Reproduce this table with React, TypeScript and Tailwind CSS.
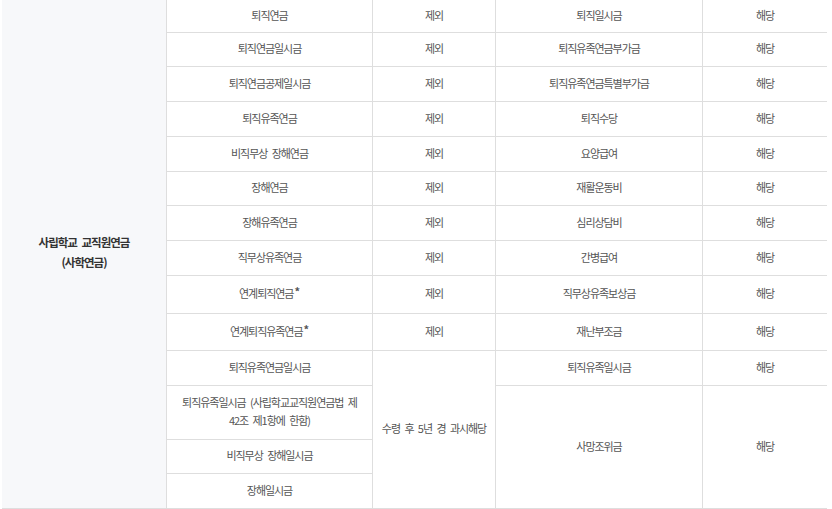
import React from "react";

const font = { fontFamily: '"Noto Sans CJK KR", "Noto Sans", sans-serif' };

const Star = () => (
  <sup className="text-[11px] font-bold relative -top-[2px] ml-[1px] tracking-normal">*</sup>
);

const left: React.ReactNode[] = [
  "퇴직연금",
  "퇴직연금일시금",
  "퇴직연금공제일시금",
  "퇴직유족연금",
  "비직무상 장해연금",
  "장해연금",
  "장해유족연금",
  "직무상유족연금",
  <>연계퇴직연금<Star /></>,
  <>연계퇴직유족연금<Star /></>,
  "퇴직유족연금일시금",
  <>퇴직유족일시금 (사립학교교직원연금법 제<br />42조 제1항에 한함)</>,
  "비직무상 장해일시금",
  "장해일시금",
];

const right: string[] = [
  "퇴직일시금",
  "퇴직유족연금부가금",
  "퇴직유족연금특별부가금",
  "퇴직수당",
  "요양급여",
  "재활운동비",
  "심리상담비",
  "간병급여",
  "직무상유족보상금",
  "재난부조금",
  "퇴직유족일시금",
];

const rowStarts = ["row-start-1", "row-start-2", "row-start-3", "row-start-4", "row-start-5", "row-start-6", "row-start-7", "row-start-8", "row-start-9", "row-start-10", "row-start-11", "row-start-12", "row-start-13", "row-start-14"];

const cellBase =
  "flex items-center justify-center text-center border-[#dedede] text-[#555] text-[11px] leading-[18px] tracking-[-1.05px] [word-spacing:3px] pb-[3px]";

export default function App() {
  return (
    <div className="w-[832px] h-[509px] bg-white overflow-hidden" style={font}>
      <div className="ml-[2px] w-[825px] grid grid-cols-[165px_206px_123px_207px_124px] grid-rows-[33px_34px_35px_35px_35px_34px_35px_35px_38px_37px_35px_54px_34px_35px]">
        <div className="col-start-1 row-start-1 row-span-14 bg-[#f7f8fa] border-r border-b border-[#dedede] flex items-center justify-center text-center text-[11.5px] leading-[20px] font-bold text-[#333] tracking-[-1px] [word-spacing:3px] pb-[4px]">
          사립학교 교직원연금
          <br />
          (사학연금)
        </div>
        {left.map((t, i) => (
          <div key={"l" + i} className={`col-start-2 ${rowStarts[i]} ${cellBase} border-r border-b px-2`}>
            <span>{t}</span>
          </div>
        ))}
        {Array.from({ length: 10 }).map((_, i) => (
          <div key={"m" + i} className={`col-start-3 ${rowStarts[i]} ${cellBase} border-r border-b`}>
            제외
          </div>
        ))}
        <div className={`col-start-3 row-start-11 row-span-4 ${cellBase} border-r border-b`}>
          수령 후 5년 경 과시해당
        </div>
        {right.map((t, i) => (
          <div key={"r" + i} className={`col-start-4 ${rowStarts[i]} ${cellBase} border-r border-b`}>
            {t}
          </div>
        ))}
        <div className={`col-start-4 row-start-12 row-span-3 ${cellBase} border-r border-b`}>
          사망조위금
        </div>
        {right.map((_, i) => (
          <div key={"h" + i} className={`col-start-5 ${rowStarts[i]} ${cellBase} border-b`}>
            해당
          </div>
        ))}
        <div className={`col-start-5 row-start-12 row-span-3 ${cellBase} border-b`}>
          해당
        </div>
      </div>
    </div>
  );
}
